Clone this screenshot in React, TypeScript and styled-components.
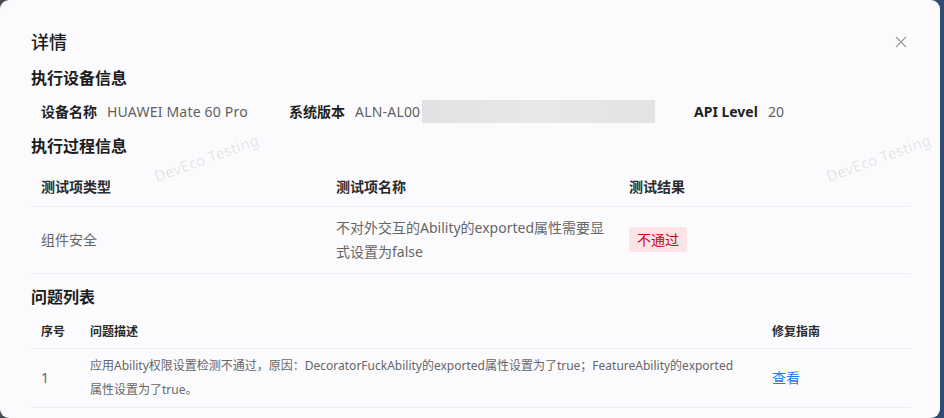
import styled, { createGlobalStyle } from "styled-components";

const GlobalStyle = createGlobalStyle`
  html, body {
    margin: 0;
    padding: 0;
    background: #3b414b;
  }
  * {
    box-sizing: border-box;
  }
`;

const Backdrop = styled.div`
  width: 944px;
  height: 418px;
  overflow: hidden;
  background: linear-gradient(90deg, #474b52 0%, #3c4656 70%, #2f4d74 100%);
  font-family: "Noto Sans", "Noto Sans CJK SC", sans-serif;
`;

const Modal = styled.div`
  position: relative;
  width: 940px;
  height: 418px;
  background: #fbfbfd;
  border-radius: 9px;
  padding: 29px 29px 0 31px;
  overflow: hidden;
`;

const Header = styled.div`
  display: flex;
  align-items: center;
  justify-content: space-between;
  height: 26px;
`;

const Title = styled.h1`
  margin: 0;
  font-size: 18px;
  font-weight: 500;
  color: #1c1c1c;
  line-height: 26px;
`;

const CloseButton = styled.button`
  display: flex;
  align-items: center;
  justify-content: center;
  width: 20px;
  height: 20px;
  padding: 0;
  border: none;
  background: none;
  cursor: pointer;
`;

const SectionTitle = styled.h2<{ $gap: number }>`
  margin: ${(p) => p.$gap}px 0 0;
  font-size: 16px;
  font-weight: 700;
  color: #1c1c1c;
  line-height: 24px;
`;

const InfoRow = styled.div`
  display: grid;
  grid-template-columns: 248px 405px auto;
  align-items: center;
  margin-top: 10px;
  padding-left: 10px;
  height: 22px;
`;

const InfoItem = styled.div`
  display: flex;
  align-items: center;
  gap: 10px;
  font-size: 14px;
  line-height: 22px;
`;

const InfoLabel = styled.span`
  font-weight: 700;
  color: #1f1f1f;
`;

const InfoValue = styled.span`
  color: #5f5f5f;
  display: flex;
  align-items: center;
  letter-spacing: 0.2px;
`;

const Redacted = styled.span`
  display: inline-block;
  width: 233px;
  height: 23px;
  margin-left: 2px;
  background: linear-gradient(90deg, #e2e2e4 0%, #e8e8ea 50%, #e3e3e5 100%);
`;

const Table = styled.table<{ $top: number }>`
  width: 880px;
  margin-top: ${(p) => p.$top}px;
  border-collapse: collapse;
  table-layout: fixed;
`;

const Th = styled.th<{ $h: number; $size: number }>`
  height: ${(p) => p.$h}px;
  padding: 0 10px;
  text-align: left;
  vertical-align: middle;
  font-size: ${(p) => p.$size}px;
  font-weight: 700;
  color: #2a2a2a;
  border-bottom: 1px solid #eceef4;
`;

const Td = styled.td<{ $h: number; $size: number }>`
  height: ${(p) => p.$h}px;
  padding: 0 10px;
  vertical-align: middle;
  font-size: ${(p) => p.$size}px;
  line-height: 24px;
  color: #666;
  border-bottom: 1px solid #eceef4;
`;

const WrapText = styled.div<{ $width: number }>`
  max-width: ${(p) => p.$width}px;
`;

const Tag = styled.span`
  display: inline-block;
  padding: 0 8px;
  height: 25px;
  line-height: 25px;
  font-size: 14px;
  color: #d0021b;
  background: #fce4e6;
  border-radius: 3px;
`;

const Link = styled.a`
  font-size: 14px;
  color: #1a7cf0;
  text-decoration: none;
  cursor: pointer;
`;

const Watermark = styled.span<{ $x: number; $y: number }>`
  position: absolute;
  left: ${(p) => p.$x}px;
  top: ${(p) => p.$y}px;
  transform: rotate(-20deg);
  transform-origin: left bottom;
  font-size: 15px;
  letter-spacing: 0.3px;
  color: rgba(0, 0, 0, 0.11);
  white-space: nowrap;
  pointer-events: none;
`;

const CloseIcon = () => (
  <svg width="12" height="12" viewBox="0 0 12 12">
    <path d="M1 1 L11 11 M11 1 L1 11" stroke="#9a9a9a" strokeWidth="1.1" fill="none" />
  </svg>
);

const processRows = [
  {
    type: "组件安全",
    name: "不对外交互的Ability的exported属性需要显式设置为false",
    result: "不通过",
  },
];

const issues = [
  {
    no: 1,
    desc: "应用Ability权限设置检测不通过，原因：DecoratorFuckAbility的exported属性设置为了true；FeatureAbility的exported属性设置为了true。",
  },
];

export default function App() {
  return (
    <Backdrop>
      <GlobalStyle />
      <Modal>
        <Header>
          <Title>详情</Title>
          <CloseButton aria-label="关闭">
            <CloseIcon />
          </CloseButton>
        </Header>

        <SectionTitle $gap={11}>执行设备信息</SectionTitle>
        <InfoRow>
          <InfoItem>
            <InfoLabel>设备名称</InfoLabel>
            <InfoValue>HUAWEI Mate 60 Pro</InfoValue>
          </InfoItem>
          <InfoItem>
            <InfoLabel>系统版本</InfoLabel>
            <InfoValue>
              ALN-AL00
              <Redacted />
            </InfoValue>
          </InfoItem>
          <InfoItem>
            <InfoLabel>API Level</InfoLabel>
            <InfoValue>20</InfoValue>
          </InfoItem>
        </InfoRow>

        <SectionTitle $gap={12}>执行过程信息</SectionTitle>
        <Table $top={8}>
          <colgroup>
            <col style={{ width: 295 }} />
            <col style={{ width: 293 }} />
            <col style={{ width: 292 }} />
          </colgroup>
          <thead>
            <tr>
              <Th $h={40} $size={14}>测试项类型</Th>
              <Th $h={40} $size={14}>测试项名称</Th>
              <Th $h={40} $size={14}>测试结果</Th>
            </tr>
          </thead>
          <tbody>
            {processRows.map((row) => (
              <tr key={row.name}>
                <Td $h={67} $size={14}>{row.type}</Td>
                <Td $h={67} $size={14}>
                  <WrapText $width={272}>{row.name}</WrapText>
                </Td>
                <Td $h={67} $size={14}>
                  <Tag>{row.result}</Tag>
                </Td>
              </tr>
            ))}
          </tbody>
        </Table>

        <SectionTitle $gap={11}>问题列表</SectionTitle>
        <Table $top={5}>
          <colgroup>
            <col style={{ width: 49 }} />
            <col style={{ width: 682 }} />
            <col style={{ width: 149 }} />
          </colgroup>
          <thead>
            <tr>
              <Th $h={35} $size={12}>序号</Th>
              <Th $h={35} $size={12}>问题描述</Th>
              <Th $h={35} $size={12}>修复指南</Th>
            </tr>
          </thead>
          <tbody>
            {issues.map((issue) => (
              <tr key={issue.no}>
                <Td $h={59} $size={14}>{issue.no}</Td>
                <Td $h={59} $size={12}>
                  <WrapText $width={650}>{issue.desc}</WrapText>
                </Td>
                <Td $h={59} $size={14}>
                  <Link>查看</Link>
                </Td>
              </tr>
            ))}
          </tbody>
        </Table>

        <Watermark $x={158} $y={166}>DevEco Testing</Watermark>
        <Watermark $x={830} $y={166}>DevEco Testing</Watermark>
      </Modal>
    </Backdrop>
  );
}
